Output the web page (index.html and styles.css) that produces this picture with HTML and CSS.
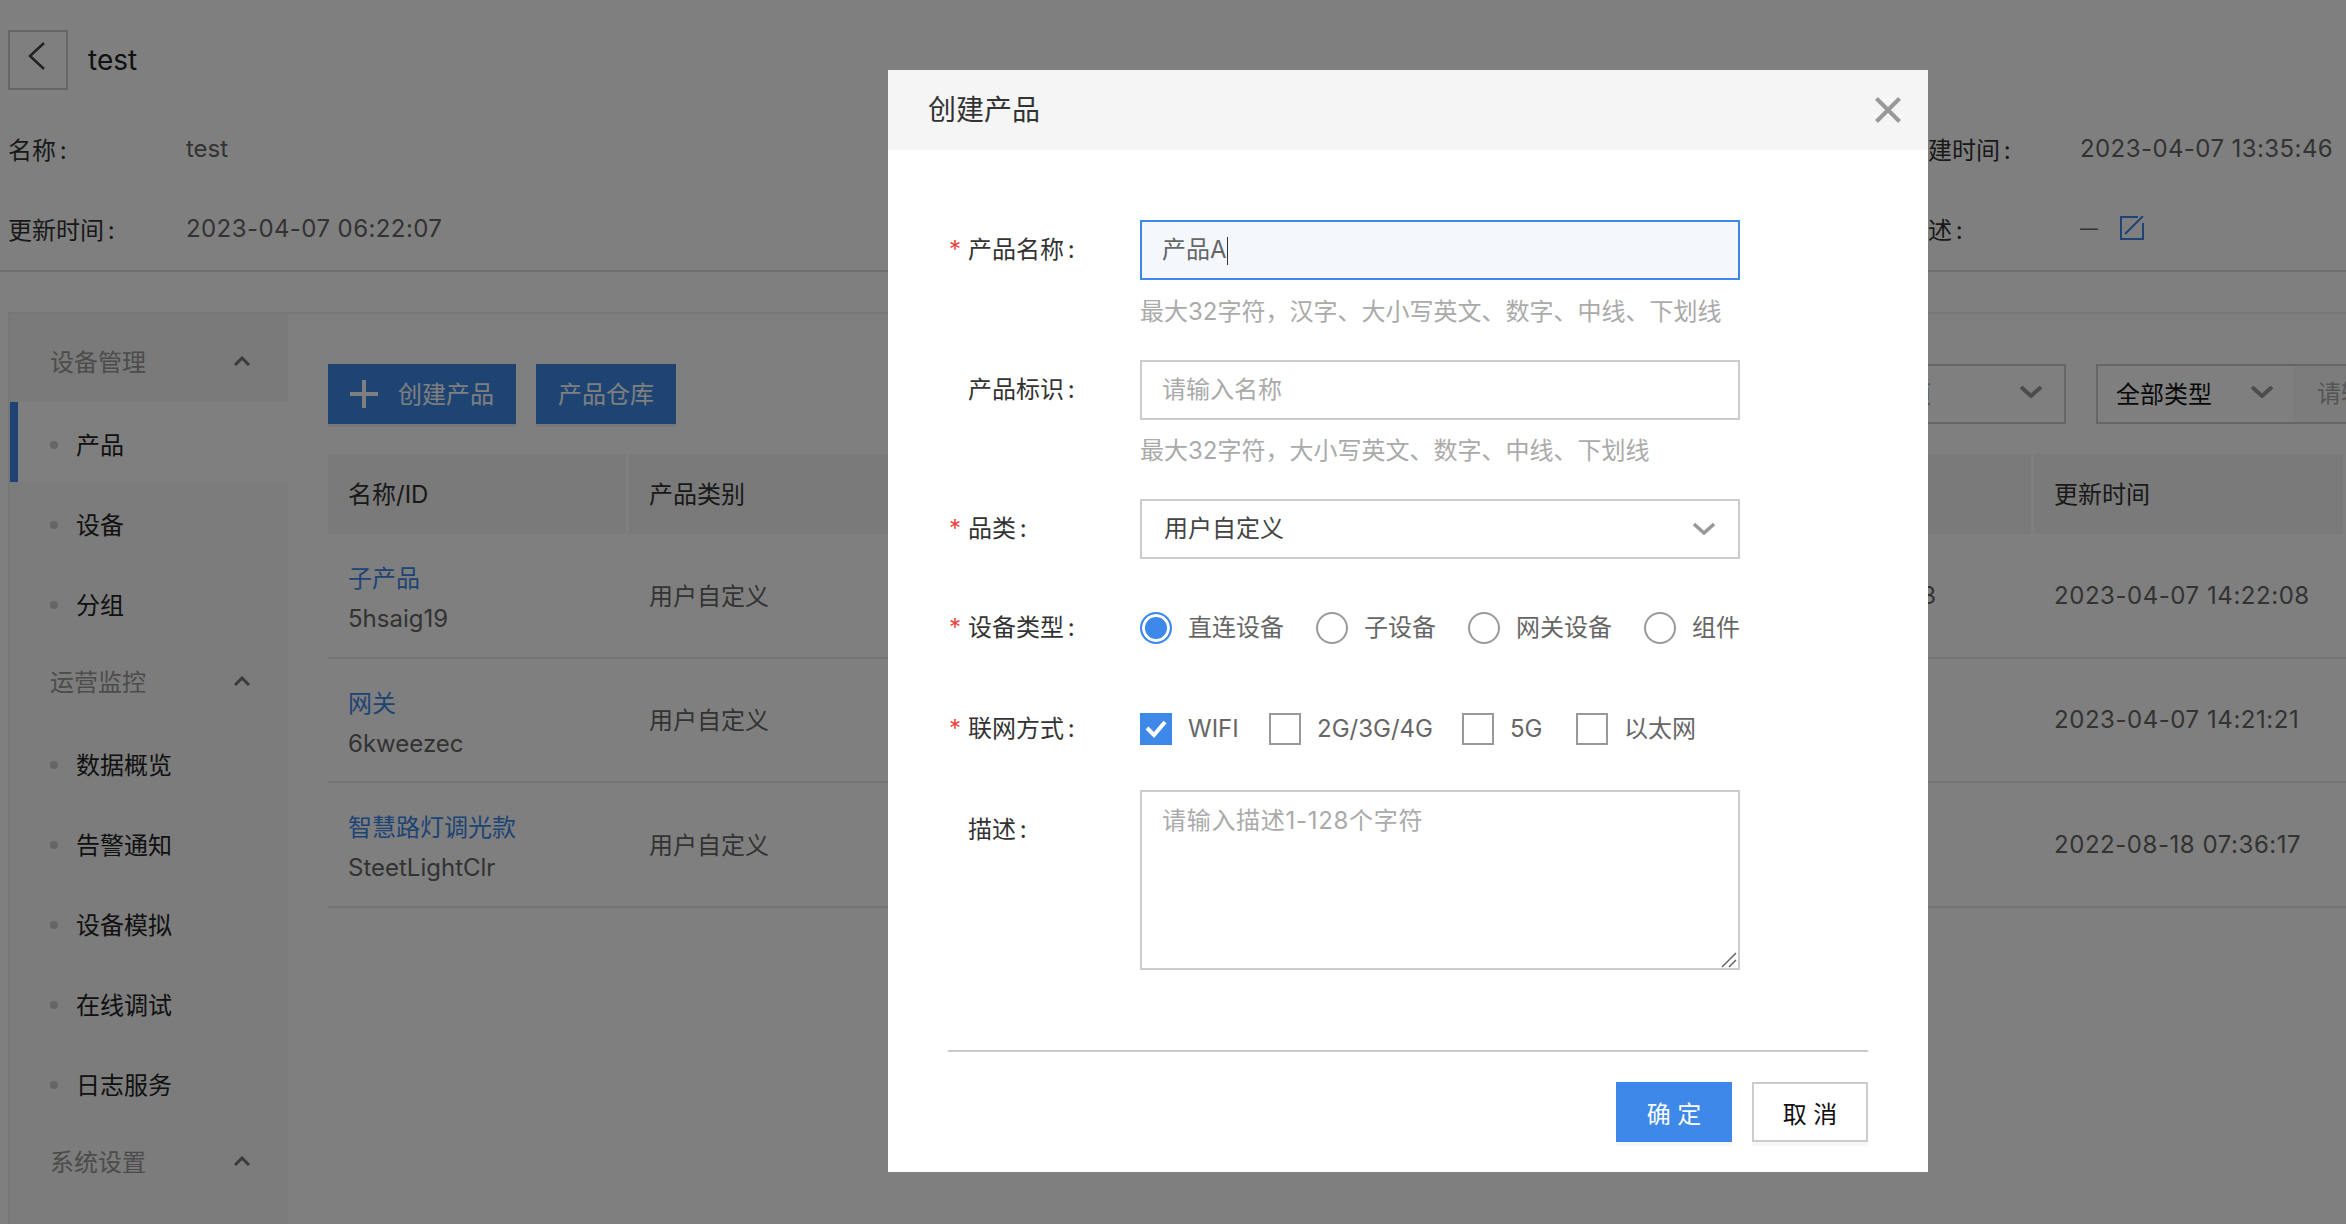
FILE: index.html
```html
<!DOCTYPE html>
<html lang="zh-CN">
<head>
    <meta charset="UTF-8">
    <meta name="viewport" content="width=device-width, initial-scale=1.0">
    <title>test</title>
    <link rel="stylesheet" href="styles.css">
</head>
<body>

    <div class="page">
        <div class="title-bar">
            <a class="back-btn">
                <svg width="18" height="28" viewBox="0 0 18 28"><path d="M16 1 L2 14 L16 27" fill="none" stroke="#444" stroke-width="2.5"/></svg>
            </a>
            <span class="title-text">test</span>
        </div>

        <div class="info">
            <div class="info-cell"><span class="info-label">名称 :</span><span class="info-value">test</span></div>
            <div class="info-cell info-right"><span class="info-label">创建时间 :</span><span class="info-value date">2023-04-07 13:35:46</span></div>
            <div class="info-cell"><span class="info-label">更新时间 :</span><span class="info-value date">2023-04-07 06:22:07</span></div>
            <div class="info-cell info-right">
                <span class="info-label">描述 :</span><span class="info-value dash">—</span>
                <svg class="edit-icon" width="24" height="24" viewBox="0 0 24 24"><path d="M18 1H1V23H23V7M5 18L23 0" fill="none" stroke="#3d88e8" stroke-width="2"/></svg>
            </div>
        </div>

        <div class="panel">
            <div class="sidebar">
                <div class="nav-group nav-group-first">设备管理
                    <svg class="nav-arrow" width="16" height="10" viewBox="0 0 16 10"><path d="M1 9L8 2L15 9" fill="none" stroke="#777" stroke-width="3"/></svg>
                </div>
                <div class="nav-item active">产品</div>
                <div class="nav-item">设备</div>
                <div class="nav-item">分组</div>
                <div class="nav-group">运营监控
                    <svg class="nav-arrow" width="16" height="10" viewBox="0 0 16 10"><path d="M1 9L8 2L15 9" fill="none" stroke="#777" stroke-width="3"/></svg>
                </div>
                <div class="nav-item">数据概览</div>
                <div class="nav-item">告警通知</div>
                <div class="nav-item">设备模拟</div>
                <div class="nav-item">在线调试</div>
                <div class="nav-item">日志服务</div>
                <div class="nav-group">系统设置
                    <svg class="nav-arrow" width="16" height="10" viewBox="0 0 16 10"><path d="M1 9L8 2L15 9" fill="none" stroke="#777" stroke-width="3"/></svg>
                </div>
            </div>

            <div class="main">
                <div class="toolbar">
                    <button class="btn-primary btn-create">
                        <svg width="30" height="30" viewBox="0 0 30 30"><path d="M15 1V29M1 15H29" fill="none" stroke="#fff" stroke-width="4"/></svg>
                        创建产品
                    </button>
                    <button class="btn-primary">产品仓库</button>
                    <div class="filters">
                        <div class="filter-select filter-muted">全部选项
                            <svg width="22" height="12" viewBox="0 0 22 12"><path d="M1 1L11 10L21 1" fill="none" stroke="#999" stroke-width="4"/></svg>
                        </div>
                        <div class="filter-select filter-type">全部类型
                            <svg width="22" height="12" viewBox="0 0 22 12"><path d="M1 1L11 10L21 1" fill="none" stroke="#999" stroke-width="4"/></svg>
                        </div>
                        <div class="filter-search">请输入</div>
                    </div>
                </div>

                <div class="table">
                    <div class="table-row table-head">
                        <div class="cell">名称/ID</div>
                        <div class="cell">产品类别</div>
                        <div class="cell">创建时间</div>
                        <div class="cell">更新时间</div>
                    </div>
                    <div class="table-row">
                        <div class="cell cell-name"><a class="link">子产品</a><span class="sub-id">5hsaig19</span></div>
                        <div class="cell">用户自定义</div>
                        <div class="cell cell-date date">2023-04-07 14:22:03</div>
                        <div class="cell cell-date date">2023-04-07 14:22:08</div>
                    </div>
                    <div class="table-row">
                        <div class="cell cell-name"><a class="link">网关</a><span class="sub-id">6kweezec</span></div>
                        <div class="cell">用户自定义</div>
                        <div class="cell cell-date date">2023-04-07 14:21:21</div>
                        <div class="cell cell-date date">2023-04-07 14:21:21</div>
                    </div>
                    <div class="table-row">
                        <div class="cell cell-name"><a class="link">智慧路灯调光款</a><span class="sub-id">SteetLightClr</span></div>
                        <div class="cell">用户自定义</div>
                        <div class="cell cell-date date">2022-08-18 07:36:17</div>
                        <div class="cell cell-date date">2022-08-18 07:36:17</div>
                    </div>
                </div>
            </div>
        </div>
    </div>

    <div class="overlay"></div>

    <div class="modal">
        <div class="modal-header">
            <span class="modal-title">创建产品</span>
            <svg width="26" height="26" viewBox="0 0 26 26"><path d="M1.5 1.5L24.5 24.5M24.5 1.5L1.5 24.5" fill="none" stroke="#999" stroke-width="4"/></svg>
        </div>
        <div class="modal-body">
            <div class="form-row">
                <label class="form-label"><span class="star">*</span>产品名称 :</label>
                <div class="input input-focus">产品A<span class="caret"></span></div>
            </div>
            <div class="hint">最大32字符，汉字、大小写英文、数字、中线、下划线</div>

            <div class="form-row">
                <label class="form-label"><span class="star"></span>产品标识 :</label>
                <input class="input" placeholder="请输入名称">
            </div>
            <div class="hint">最大32字符，大小写英文、数字、中线、下划线</div>

            <div class="form-row">
                <label class="form-label"><span class="star">*</span>品类 :</label>
                <div class="input input-select">用户自定义
                    <svg width="22" height="12" viewBox="0 0 22 12"><path d="M1 1L11 10L21 1" fill="none" stroke="#999" stroke-width="3.5"/></svg>
                </div>
            </div>

            <div class="form-row row-radio">
                <label class="form-label"><span class="star">*</span>设备类型 :</label>
                <div class="options">
                    <span class="radio radio-on"></span><span class="opt-text w-radio1">直连设备</span>
                    <span class="radio"></span><span class="opt-text w-radio2">子设备</span>
                    <span class="radio"></span><span class="opt-text w-radio3">网关设备</span>
                    <span class="radio"></span><span class="opt-text">组件</span>
                </div>
            </div>

            <div class="form-row row-check">
                <label class="form-label"><span class="star">*</span>联网方式 :</label>
                <div class="options">
                    <span class="check check-on">
                        <svg width="24" height="20" viewBox="0 0 24 20"><path d="M3 9L10 16L21 3" fill="none" stroke="#fff" stroke-width="4"/></svg>
                    </span><span class="opt-text w-check1">WIFI</span>
                    <span class="check"></span><span class="opt-text w-check2">2G/3G/4G</span>
                    <span class="check"></span><span class="opt-text w-check3">5G</span>
                    <span class="check"></span><span class="opt-text">以太网</span>
                </div>
            </div>

            <div class="form-row row-desc">
                <label class="form-label label-top"><span class="star"></span>描述 :</label>
                <div class="textarea-wrap">
                    <textarea class="textarea" placeholder="请输入描述1-128个字符"></textarea>
                    <svg class="grip" width="16" height="16" viewBox="0 0 16 16"><path d="M1 15L15 1M8 15L15 8" fill="none" stroke="#666" stroke-width="1.5"/></svg>
                </div>
            </div>

            <div class="form-foot">
                <button class="btn-ok">确 定</button>
                <button class="btn-cancel">取 消</button>
            </div>
        </div>
    </div>

</body>
</html>
```

FILE: styles.css
```css
* {
    box-sizing: border-box;
}

body {
    margin: 0;
    width: 2346px;
    height: 1224px;
    overflow: hidden;
    background-color: #fff;
    font-family: Inter, "Noto Sans CJK SC", sans-serif;
    font-size: 24px;
    color: #333;
}

button {
    font-family: inherit;
    font-size: 24px;
    cursor: pointer;
}

.page {
    width: 2346px;
    height: 1224px;
    overflow: hidden;
}

.title-bar {
    display: flex;
    align-items: center;
    height: 110px;
    padding: 30px 0 20px 8px;
}

.back-btn {
    display: flex;
    align-items: center;
    justify-content: center;
    width: 60px;
    height: 60px;
    padding: 0 2px 8px 0;
    border: 2px solid #ccc;
}

.title-text {
    margin-left: 20px;
    font-size: 28px;
    color: #222;
}

.info {
    display: grid;
    grid-template-columns: 1896px 442px;
    padding-left: 8px;
    border-bottom: 2px solid #ddd;
    height: 162px;
}

.info-cell {
    display: flex;
    align-items: center;
    height: 80px;
    padding-bottom: 4px;
}

.info-label {
    width: 178px;
    flex-shrink: 0;
    word-spacing: -3px;
}

.info-right .info-label {
    width: 176px;
}

.info-value {
    color: #666;
    white-space: nowrap;
}

.date {
    letter-spacing: 0.42px;
}

.dash {
    width: 18px;
    font-size: 18px;
}

.edit-icon {
    margin-left: 22px;
}

.panel {
    display: flex;
    height: 912px;
    margin: 40px 0 0 8px;
    border-top: 2px solid #eee;
    border-left: 2px solid #eee;
}

.sidebar {
    width: 278px;
    flex-shrink: 0;
    background-color: #f8f8f8;
}

.nav-group {
    display: flex;
    align-items: center;
    justify-content: space-between;
    height: 80px;
    padding: 0 38px 3px 40px;
    color: #999;
}

.nav-group-first {
    height: 88px;
    padding-top: 8px;
    background-color: #f4f4f4;
}

.nav-item {
    position: relative;
    display: flex;
    align-items: center;
    height: 80px;
    padding: 3px 0 0 66px;
    color: #222;
}

.nav-item::before {
    content: "";
    position: absolute;
    left: 40px;
    top: 39px;
    width: 8px;
    height: 8px;
    border-radius: 50%;
    background-color: #ccc;
}

.nav-item.active {
    background-color: #fff;
    border-left: 8px solid #3d88e8;
    padding-left: 58px;
}

.nav-item.active::before {
    left: 32px;
}

.main {
    flex: 1;
    min-width: 0;
    padding: 50px 0 0 40px;
}

.toolbar {
    display: flex;
    height: 60px;
}

.btn-primary {
    display: flex;
    align-items: center;
    gap: 19px;
    height: 60px;
    padding: 0 22px 3px;
    margin-right: 20px;
    border: 0;
    background-color: #3d88e8;
    color: #fff;
    box-shadow: 0 3px 0 #f0f0f0;
    white-space: nowrap;
}

.btn-create {
    padding: 0 22px 3px 21px;
}

.btn-create svg {
    margin-top: 3px;
}

.filters {
    display: flex;
    margin-left: auto;
}

.filter-select {
    display: flex;
    align-items: center;
    justify-content: space-between;
    height: 60px;
    padding: 0 20px 4px 18px;
    border: 2px solid #ccc;
}

.filter-muted {
    width: 251px;
    margin-right: 30px;
    padding-right: 22px;
    color: #aaa;
}

.filter-type {
    width: 197px;
    color: #111;
    border-right: 0;
}

.filter-search {
    width: 53px;
    height: 60px;
    line-height: 56px;
    padding-left: 24px;
    border: 2px solid #ccc;
    border-width: 2px 0;
    background-color: #f8f8f8;
    color: #aaa;
    white-space: nowrap;
    overflow: hidden;
}

.table {
    margin-top: 30px;
}

.table-row {
    display: grid;
    grid-template-columns: 301px 1032px 373px 312px;
    height: 124.5px;
    border-bottom: 2px solid #e8e8e8;
    color: #666;
}

.table-head {
    height: 80px;
    border-bottom: 0;
    color: #333;
}

.cell {
    display: flex;
    flex-direction: column;
    justify-content: center;
    padding: 0 0 2px 20px;
    white-space: nowrap;
}

.cell-name {
    padding-top: 8px;
    padding-bottom: 0;
}

.cell-date {
    padding-bottom: 0;
    letter-spacing: 0.55px;
}

.table-head .cell {
    padding-bottom: 4px;
    background-color: #f4f4f4;
    border-right: 3px solid #fff;
}

.link {
    color: #3d88e8;
    line-height: 40px;
}

.sub-id {
    color: #666;
    line-height: 40px;
}

.overlay {
    position: fixed;
    top: 0;
    left: 0;
    width: 100%;
    height: 100%;
    background-color: rgba(0, 0, 0, 0.5);
}

.modal {
    position: fixed;
    top: 70px;
    left: 888px;
    width: 1040px;
    height: 1102px;
    background-color: #fff;
}

.modal-header {
    display: flex;
    align-items: center;
    justify-content: space-between;
    height: 80px;
    padding: 0 27px 0 40px;
    background-color: #f5f5f5;
}

.modal-title {
    font-size: 28px;
    line-height: 36px;
    color: #333;
}

.modal-body {
    padding: 70px 60px 0;
}

.form-row {
    display: flex;
    align-items: center;
}

.form-label {
    display: flex;
    align-items: center;
    width: 192px;
    flex-shrink: 0;
    line-height: 26px;
    color: #333;
    white-space: pre;
    word-spacing: -3px;
}

.star {
    width: 20px;
    flex-shrink: 0;
    padding-left: 1px;
    color: #e8473f;
    font-size: 24px;
}

.input {
    display: block;
    width: 600px;
    height: 60px;
    line-height: 56px;
    padding: 0 20px;
    border: 2px solid #ccc;
    border-radius: 0;
    outline: none;
    font-family: inherit;
    font-size: 24px;
    color: #666;
}

.input::placeholder,
.textarea::placeholder {
    color: #aaa;
    opacity: 1;
}

.input-focus {
    border-color: #3d88e8;
    background-color: #f4f8fd;
}

.caret {
    display: inline-block;
    width: 1.5px;
    height: 28px;
    background-color: #333;
    vertical-align: middle;
}

.input-select {
    display: flex;
    align-items: center;
    justify-content: space-between;
    padding: 0 23px 0 22px;
    color: #444;
}

.hint {
    height: 32px;
    margin: 15.5px 0 32px 192px;
    line-height: 32px;
    color: #aaa;
    white-space: nowrap;
}

.row-radio {
    margin-top: 53px;
}

.row-check {
    margin-top: 69px;
}

.row-desc {
    align-items: flex-start;
    margin-top: 45px;
}

.options {
    display: flex;
    align-items: center;
    height: 32px;
    color: #666;
    line-height: 28px;
    white-space: nowrap;
}

.radio {
    width: 32px;
    height: 32px;
    flex-shrink: 0;
    border: 2px solid #999;
    border-radius: 50%;
    background-color: #fff;
}

.radio-on {
    border-color: #3d88e8;
    background-color: #3d88e8;
    box-shadow: inset 0 0 0 3px #fff;
}

.check {
    display: flex;
    align-items: center;
    justify-content: center;
    width: 32px;
    height: 32px;
    flex-shrink: 0;
    border: 2px solid #999;
}

.check-on {
    border-color: #3d88e8;
    background-color: #3d88e8;
}

.opt-text {
    margin-left: 16px;
}

.w-radio1 { width: 128px; }
.w-radio2 { width: 104px; }
.w-radio3 { width: 128px; }
.w-check1 { width: 81px; }
.w-check2 { width: 145px; }
.w-check3 { width: 66px; }

.form-label.label-top {
    padding: 20px 0 0;
    line-height: 40px;
}

.textarea-wrap {
    position: relative;
    width: 600px;
    height: 180px;
}

.textarea {
    display: block;
    width: 600px;
    height: 180px;
    padding: 13px 20px;
    border: 2px solid #ccc;
    border-radius: 0;
    outline: none;
    resize: none;
    font-family: inherit;
    font-size: 24px;
    line-height: 32px;
}

.textarea::placeholder {
    letter-spacing: 0.7px;
}

.grip {
    position: absolute;
    right: 3px;
    bottom: 2px;
}

.form-foot {
    display: flex;
    justify-content: flex-end;
    gap: 20px;
    margin-top: 80px;
    padding-top: 30px;
    border-top: 2px solid #ccc;
}

.btn-ok,
.btn-cancel {
    width: 116px;
    height: 60px;
    padding: 0;
    box-shadow: 0 4px 0 #f7f7f7;
}

.btn-ok {
    border: 0;
    background-color: #3d88e8;
    color: #fff;
}

.btn-cancel {
    border: 2px solid #ccc;
    background-color: #fff;
    color: #111;
}
```
